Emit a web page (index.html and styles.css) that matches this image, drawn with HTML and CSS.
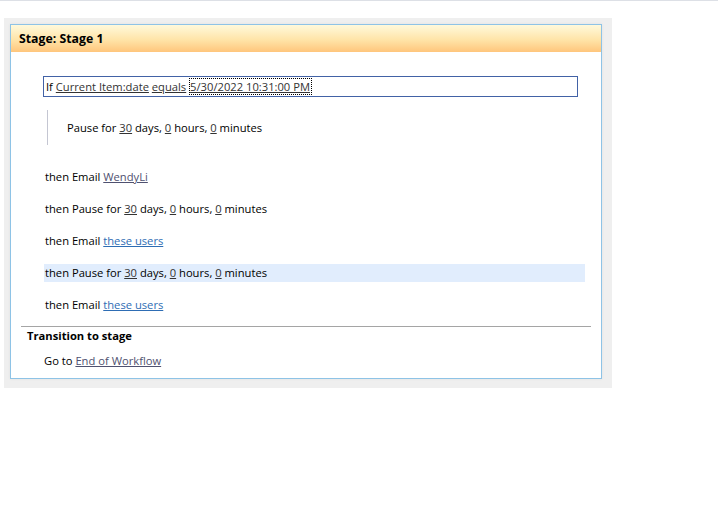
FILE: index.html
```html
<!DOCTYPE html>
<html lang="en">
<head>
    <meta charset="UTF-8">
    <title>Workflow Stage</title>
    <link rel="stylesheet" href="styles.css">
</head>
<body>
    <div class="barra-superior"></div>

    <div class="lienzo">
        <div class="etapa">
            <div class="etapa-titulo">Stage: Stage 1</div>

            <div class="etapa-cuerpo">
                <div class="condicion">
                    If <a class="enlace">Current Item:date</a> <a class="enlace">equals</a> <span class="valor-activo"><a class="enlace">5/30/2022 10:31:00 PM</a></span>
                </div>

                <div class="bloque-anidado">
                    <div class="paso">Pause for <a class="enlace">30</a> days, <a class="enlace">0</a> hours, <a class="enlace">0</a> minutes</div>
                </div>

                <div class="pasos">
                    <div class="paso">then Email <a class="enlace enlace-gris">WendyLi</a></div>
                    <div class="paso">then Pause for <a class="enlace">30</a> days, <a class="enlace">0</a> hours, <a class="enlace">0</a> minutes</div>
                    <div class="paso">then Email <a class="enlace enlace-azul">these users</a></div>
                    <div class="paso seleccionado">then Pause for <a class="enlace">30</a> days, <a class="enlace">0</a> hours, <a class="enlace">0</a> minutes</div>
                    <div class="paso">then Email <a class="enlace enlace-azul">these users</a></div>
                </div>
            </div>

            <div class="transicion">
                <div class="transicion-titulo">Transition to stage</div>
                <div class="paso transicion-paso">Go to <a class="enlace enlace-gris">End of Workflow</a></div>
            </div>
        </div>
    </div>
</body>
</html>
```

FILE: styles.css
```css
body {
    margin: 0;
    font-family: "Open Sans", "Noto Sans", Arial, sans-serif;
    font-size: 11.2px;
    color: #000;
    background-color: #fff;
}

.barra-superior {
    height: 1px;
    background-color: #dde0e6;
}

.lienzo {
    width: 596px;
    margin: 17px 0 0 4px;
    padding: 6px 6px 9px 6px;
    background-color: #efefef;
}

.etapa {
    width: 590px;
    border: 1px solid #8ec3e6;
    background-color: #fff;
    box-shadow: 0 0 3px rgba(0, 0, 0, 0.06);
}

.etapa-titulo {
    height: 27px;
    line-height: 27px;
    padding-left: 8px;
    font-weight: bold;
    font-size: 12.3px;
    background: linear-gradient(to bottom, #fff9db 0%, #ffe4a8 55%, #ffc67c 100%);
}

.etapa-cuerpo {
    padding: 24px 0 0 32px;
}

.condicion {
    width: 531px;
    height: 19px;
    line-height: 19px;
    padding-left: 2px;
    border: 1px solid #4262a6;
}

.enlace {
    color: #333;
    text-decoration: underline;
}

.enlace-gris {
    color: #4f5170;
}

.enlace-azul {
    color: #2e6db4;
}

.valor-activo {
    outline: 1px dotted #000;
    outline-offset: -1px;
    padding: 1px 2px 1px 1px;
}

.bloque-anidado {
    margin: 13px 0 0 4px;
    padding: 9px 0 8px 19px;
    border-left: 1px solid #c4c6d2;
}

.paso {
    height: 18px;
    line-height: 18px;
}

.pasos {
    margin: 23px 0 0 1px;
    width: 541px;
    display: flex;
    flex-direction: column;
    gap: 14px;
}

.pasos .paso {
    padding-left: 1px;
}

.seleccionado {
    background-color: #e1edfd;
}

.transicion {
    margin: 12px 10px 0 10px;
    padding-bottom: 8px;
    border-top: 1px solid #a5a5a5;
}

.transicion-titulo {
    height: 17px;
    line-height: 17px;
    padding-left: 6px;
    font-weight: bold;
}

.transicion-paso {
    margin-top: 8px;
    padding-left: 23px;
}
```
